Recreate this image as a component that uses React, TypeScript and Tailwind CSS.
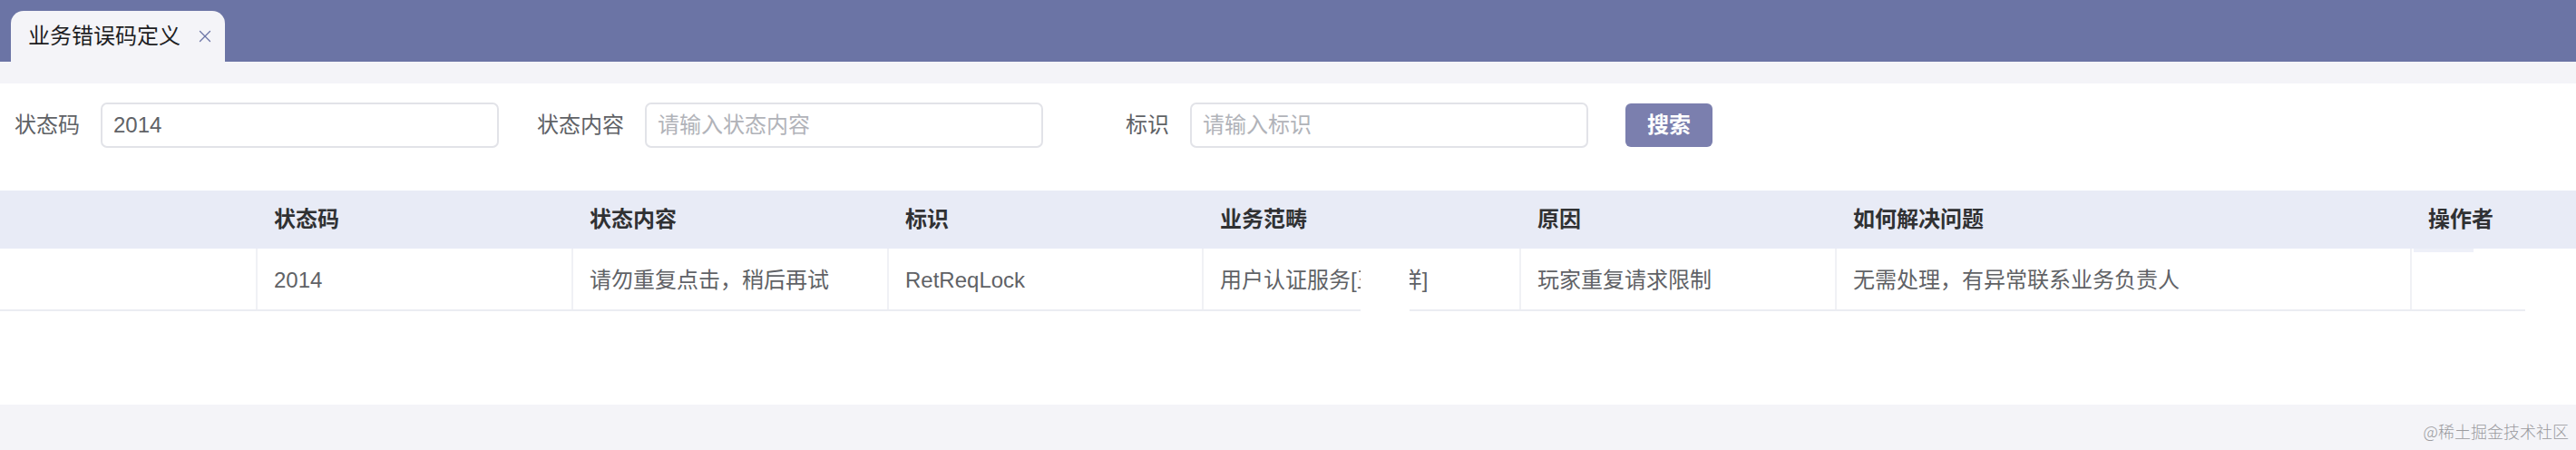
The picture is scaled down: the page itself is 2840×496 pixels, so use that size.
import { X } from 'lucide-react';

const FONT = 'font-["Liberation_Sans","Noto_Sans_CJK_SC",sans-serif]';

const columns = ['', '状态码', '状态内容', '标识', '业务范畴', '原因', '如何解决问题', '操作者'];

const row = [
  '',
  '2014',
  '请勿重复点击，稍后再试',
  'RetReqLock',
  '用户认证服务[王者详]',
  '玩家重复请求限制',
  '无需处理，有异常联系业务负责人',
  '',
];

const GRID = 'grid grid-cols-[284px_348px_348px_347px_350px_348px_634px_1fr]';

function Field({
  label,
  value,
  placeholder,
  className,
}: {
  label: string;
  value?: string;
  placeholder?: string;
  className?: string;
}) {
  return (
    <div className={`flex items-center ${className ?? ''}`}>
      <span className="text-[24px] leading-none text-[#606266]">{label}</span>
      <div className="ml-[23px] flex h-[50px] w-[439px] items-center rounded-[7px] border-2 border-[#e2e3e8] bg-white px-[12px]">
        {value ? (
          <span className="text-[24px] text-[#606266]">{value}</span>
        ) : (
          <span className="text-[24px] text-[#b1b3b9]">{placeholder}</span>
        )}
      </div>
    </div>
  );
}

export default function App() {
  return (
    <div className={`flex h-[496px] w-[2840px] flex-col overflow-hidden bg-[#f4f4f8] ${FONT}`}>
      {/* tab bar */}
      <div className="flex h-[68px] shrink-0 items-end bg-[#6b74a5] pl-[12px]">
        <div className="flex h-[56px] w-[236px] items-center rounded-t-[14px] bg-[#f4f4f8] pl-[19px]">
          <span className="text-[24px] leading-none text-[#1d1d1f]">业务错误码定义</span>
          <X size={22} strokeWidth={1.4} className="ml-[16px] text-[#6b74a5]" />
        </div>
      </div>
      <div className="h-[24px] shrink-0" />

      {/* search form + table */}
      <div className="flex h-[354px] shrink-0 flex-col bg-white">
        <div className="flex items-center pl-[16px] pt-[21px]">
          <Field label="状态码" value="2014" />
          <Field label="状态内容" placeholder="请输入状态内容" className="ml-[42px]" />
          <Field label="标识" placeholder="请输入标识" className="ml-[91px]" />
          <button
            type="button"
            className="ml-[41px] flex h-[48px] w-[96px] items-center justify-center rounded-[6px] bg-[#7b7fae] text-[24px] font-bold text-white"
          >
            搜索
          </button>
        </div>

        <div className="mt-[47px]">
          <div className={`${GRID} h-[64px] bg-[#e8ebf6]`}>
            {columns.map((c, i) => (
              <div key={i} className="flex items-center pl-[18px] text-[24px] font-bold text-[#303133]">
                {c}
              </div>
            ))}
          </div>
          <div className="relative">
            <div className={`${GRID} h-[69px] border-b-2 border-[#ebedf2]`}>
              {row.map((c, i) => (
                <div
                  key={i}
                  className={`flex items-center pl-[18px] pt-[2px] text-[24px] text-[#606266] ${
                    i < row.length - 1 ? 'border-r-2 border-[#f0f1f5]' : ''
                  }`}
                >
                  {c}
                </div>
              ))}
            </div>
            {/* masked areas in the screenshot */}
            <div className="absolute left-[1500px] top-0 h-[69px] w-[54px] bg-white" />
            <div className="absolute left-[2661px] top-0 h-[67px] w-[179px] bg-white">
              <div className="h-[4px] w-[66px] bg-[#eef0f8]" />
            </div>
            <div className="absolute left-[2784px] top-[64px] h-[6px] w-[56px] bg-white" />
          </div>
        </div>
      </div>

      {/* footer */}
      <div className="flex flex-1 items-center justify-end pr-[8px] pt-[8px]">
        <span className='font-["Noto_Sans_CJK_SC",serif] text-[18px] font-light text-[#9a9a9e]'>@稀土掘金技术社区</span>
      </div>
    </div>
  );
}
